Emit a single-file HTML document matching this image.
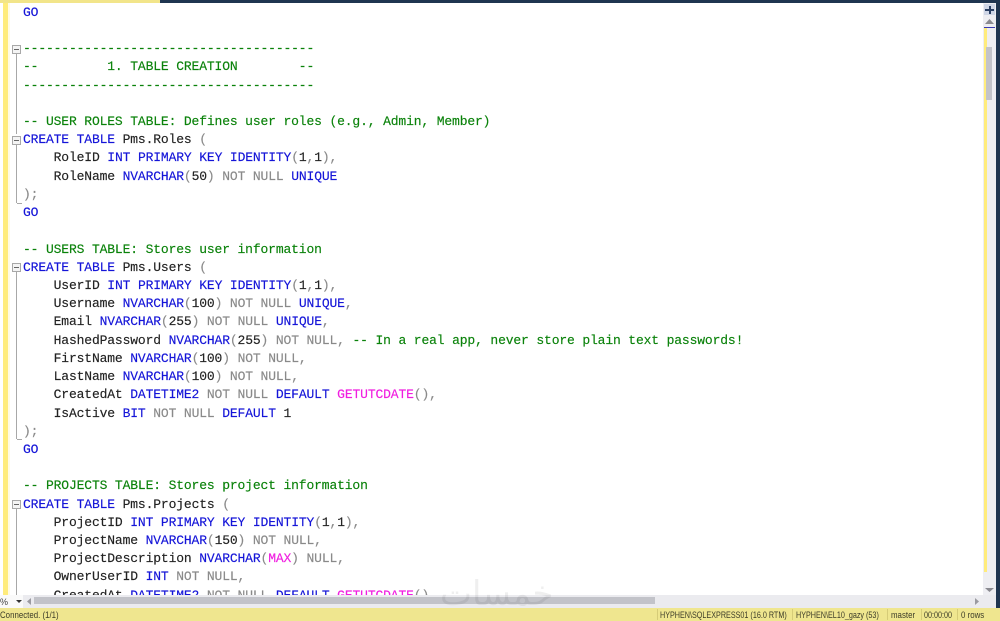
<!DOCTYPE html>
<html><head><meta charset="utf-8"><style>
html,body{margin:0;padding:0;background:#fff}
#p{position:relative;width:1000px;height:621px;overflow:hidden;background:#fff;font-family:"Liberation Sans",sans-serif;filter:blur(.35px)}
#p div{position:absolute}
#code{left:23px;top:3.7px;width:955px;height:591.3px;overflow:hidden;font:13px/18.22px "Liberation Mono",monospace;letter-spacing:-.14px;color:#222;white-space:pre;-webkit-text-stroke:.15px}
b{font-weight:normal;color:#1414d8}
i{font-style:normal;color:#8a8a8a}
u{text-decoration:none;color:#0a820a}
s{text-decoration:none;color:#f01ee0}
.fb{left:12px;width:7px;height:7px;border:1px solid #a8a8a8;background:#f4f4f4}
.fb:after{content:"";position:absolute;left:1px;top:3px;width:5px;height:1px;background:#666}
.fl{left:16px;width:1px;background:#a8a8a8}
.ft{left:17px;width:5px;height:1px;background:#a8a8a8}
.st{top:609px;font-size:9px;line-height:12px;color:#3c3c28;white-space:nowrap;transform:scaleX(.875);transform-origin:0 0}
.n{transform:scaleX(.8)}
.sp{top:609px;width:1px;height:11px;background:#d6cc78}
</style></head><body><div id="p">
<div style="left:0;top:0;width:160px;height:3px;background:#f2e58a"></div>
<div style="left:160px;top:0;width:840px;height:3px;background:#1f3550"></div>
<div style="left:3px;top:3px;width:5px;height:592px;background:#ffec7c"></div>
<div style="left:8px;top:3px;width:2px;height:592px;background:#fffbe4"></div>
<div class="fb" style="top:45px"></div><div class="fl" style="top:54px;height:80px"></div>
<div class="fb" style="top:136px"></div><div class="fl" style="top:145px;height:58px"></div><div class="ft" style="top:203px"></div>
<div class="fb" style="top:263px"></div><div class="fl" style="top:272px;height:167px"></div><div class="ft" style="top:439px"></div>
<div class="fb" style="top:500px"></div><div class="fl" style="top:509px;height:86px"></div>
<div id="code"><b>GO</b>

<u>--------------------------------------</u>
<u>--         1. TABLE CREATION        --</u>
<u>--------------------------------------</u>

<u>-- USER ROLES TABLE: Defines user roles (e.g., Admin, Member)</u>
<b>CREATE</b> <b>TABLE</b> Pms.Roles <i>(</i>
    RoleID <b>INT</b> <b>PRIMARY</b> <b>KEY</b> <b>IDENTITY</b><i>(</i>1<i>,</i>1<i>),</i>
    RoleName <b>NVARCHAR</b><i>(</i>50<i>)</i> <i>NOT NULL</i> <b>UNIQUE</b>
<i>);</i>
<b>GO</b>

<u>-- USERS TABLE: Stores user information</u>
<b>CREATE</b> <b>TABLE</b> Pms.Users <i>(</i>
    UserID <b>INT</b> <b>PRIMARY</b> <b>KEY</b> <b>IDENTITY</b><i>(</i>1<i>,</i>1<i>),</i>
    Username <b>NVARCHAR</b><i>(</i>100<i>)</i> <i>NOT NULL</i> <b>UNIQUE</b><i>,</i>
    Email <b>NVARCHAR</b><i>(</i>255<i>)</i> <i>NOT NULL</i> <b>UNIQUE</b><i>,</i>
    HashedPassword <b>NVARCHAR</b><i>(</i>255<i>)</i> <i>NOT NULL,</i> <u>-- In a real app, never store plain text passwords!</u>
    FirstName <b>NVARCHAR</b><i>(</i>100<i>)</i> <i>NOT NULL,</i>
    LastName <b>NVARCHAR</b><i>(</i>100<i>)</i> <i>NOT NULL,</i>
    CreatedAt <b>DATETIME2</b> <i>NOT NULL</i> <b>DEFAULT</b> <s>GETUTCDATE</s><i>(),</i>
    IsActive <b>BIT</b> <i>NOT NULL</i> <b>DEFAULT</b> 1
<i>);</i>
<b>GO</b>

<u>-- PROJECTS TABLE: Stores project information</u>
<b>CREATE</b> <b>TABLE</b> Pms.Projects <i>(</i>
    ProjectID <b>INT</b> <b>PRIMARY</b> <b>KEY</b> <b>IDENTITY</b><i>(</i>1<i>,</i>1<i>),</i>
    ProjectName <b>NVARCHAR</b><i>(</i>150<i>)</i> <i>NOT NULL,</i>
    ProjectDescription <b>NVARCHAR</b><i>(</i><s>MAX</s><i>)</i> <i>NULL,</i>
    OwnerUserID <b>INT</b> <i>NOT NULL,</i>
    CreatedAt <b>DATETIME2</b> <i>NOT NULL</i> <b>DEFAULT</b> <s>GETUTCDATE</s><i>()</i></div>

<div style="left:983px;top:3px;width:13px;height:592px;background:#eeeef2"></div>
<div style="left:984px;top:4px;width:11px;height:11px;background:#cfd6e6"></div>
<div style="left:985px;top:9px;width:9px;height:2px;background:#2a3f63"></div>
<div style="left:988.5px;top:6px;width:2px;height:8px;background:#2a3f63"></div>
<svg style="position:absolute;left:985px;top:19px" width="9" height="5"><path d="M4.5 0L9 5H0Z" fill="#8a8a90"/></svg>
<div style="left:984px;top:27px;width:11px;height:1px;background:#3a3ab0"></div>
<div style="left:984px;top:28px;width:3px;height:544px;background:#ffec7c"></div>
<div style="left:986px;top:47px;width:6px;height:53px;background:#c2c3c9"></div>
<svg style="position:absolute;left:985px;top:588px" width="9" height="4"><path d="M0 0H9L4.5 4Z" fill="#8a8a90"/></svg>
<div style="left:996px;top:0;width:4px;height:621px;background:#1f3550"></div>

<div style="left:0;top:595px;width:996px;height:13px;background:#ebebef"></div>
<div style="left:0;top:595px;width:23px;height:13px;background:#fafafa"></div>
<div style="left:0;top:596px;font-size:9px;line-height:12px;color:#444">%</div>
<svg style="position:absolute;left:16px;top:600px" width="6" height="3"><path d="M0 0H6L3 3Z" fill="#333"/></svg>
<svg style="position:absolute;left:27px;top:598px" width="4" height="7"><path d="M4 0V7L0 3.5Z" fill="#9a9aa0"/></svg>
<div style="left:34px;top:597px;width:621px;height:7px;background:#c2c3c9"></div>
<svg style="position:absolute;left:975px;top:598px" width="4" height="7"><path d="M0 0V7L4 3.5Z" fill="#9a9aa0"/></svg>
<div style="left:440px;top:578px;font:34px/32px 'DejaVu Sans',sans-serif;color:#000;opacity:.06;white-space:nowrap">خمسات</div>

<div style="left:0;top:608px;width:1000px;height:13px;background:#efe68f"></div>
<div class="st" style="left:0">Connected. (1/1)</div>
<div class="sp" style="left:657px"></div><div class="st n" style="left:660px">HYPHEN\SQLEXPRESS01 (16.0 RTM)</div>
<div class="sp" style="left:792px"></div><div class="st n" style="left:796px">HYPHEN\EL10_gazy (53)</div>
<div class="sp" style="left:887px"></div><div class="st" style="left:891px">master</div>
<div class="sp" style="left:921px"></div><div class="st n" style="left:924px">00:00:00</div>
<div class="sp" style="left:957px"></div><div class="st" style="left:961px">0 rows</div>
</div></body></html>
